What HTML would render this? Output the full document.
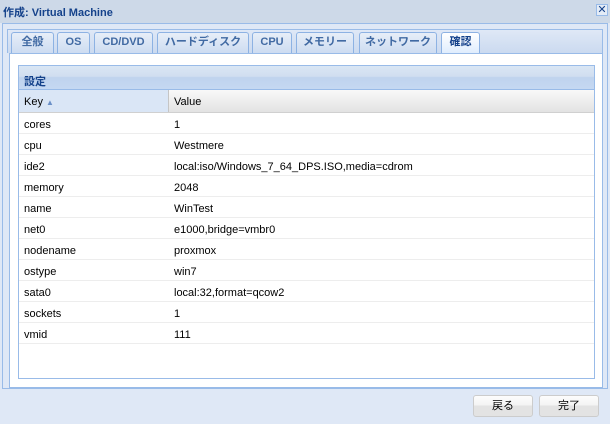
<!DOCTYPE html><html><head><meta charset="utf-8"><style>
*{box-sizing:border-box;margin:0;padding:0}
body{width:610px;height:424px;background:#dfe8f6;font-family:"Liberation Sans","Noto Sans CJK JP",sans-serif;font-size:11px;position:relative;overflow:hidden}
.hdr{position:absolute;left:0;top:0;width:610px;height:23px;background:#cdd9e8}
.ttl{position:absolute;left:3px;top:4px;font-weight:bold;color:#15428b;font-size:11px}
.x{position:absolute;left:596px;top:4px;width:12px;height:12px;border:1px solid #99bbe8;background:#e4ecf7;color:#15428b;font-size:11px;line-height:10px;text-align:center}
.outer{position:absolute;left:2px;top:23px;width:606px;height:366px;border:1px solid #99bbe8;background:#dfe8f6}
.strip{position:absolute;left:7px;top:29px;width:596px;height:24px;border:1px solid #99bbe8;border-bottom:none;background:linear-gradient(#dfe8f6,#cbdaf0)}
.tab{position:absolute;top:32px;height:21px;border:1px solid #8db2e3;border-bottom:none;border-radius:3px 3px 0 0;background:linear-gradient(#e7eef8,#cddcf1);color:#416aa3;font-weight:bold;text-align:center;line-height:19px;font-size:11px}
.tab.a{background:linear-gradient(#fff,#deecfd);color:#15428b;height:22px}
.content{position:absolute;left:9px;top:53px;width:594px;height:335px;background:#fff;border:1px solid #99bbe8}
.grid{position:absolute;left:18px;top:65px;width:577px;height:314px;border:1px solid #99bbe8;background:#fff}
.gt{height:24px;background:linear-gradient(#dae6f4 0%,#d0def0 45%,#bfd3ee 50%,#c5d8f2);border-bottom:1px solid #99bbe8;color:#15428b;font-weight:bold;padding:7px 0 0 5px}
.gh{height:23px;display:flex;border-bottom:1px solid #d0d0d0}
.gh div{padding:6px 0 0 5px}
.k{width:150px;background:#dae6f6;border-right:1px solid #c5c5c5}
.v{flex:1;background:linear-gradient(#f9f9f9,#e3e3e3)}
.row{height:21px;display:flex;border-bottom:1px solid #ededed;color:#000}
.row div{padding:6px 0 0 5px}
.row .c1{width:150px}
.btn{position:absolute;top:395px;width:60px;height:22px;border:1px solid #ccc;border-radius:3px;background:linear-gradient(#fdfdfd 0%,#f4f4f4 45%,#e3e3e3 50%,#e3e3e3);text-align:center;line-height:20px;color:#000}
</style></head><body>
<div class="hdr"><div class="ttl">作成: Virtual Machine</div><div class="x">✕</div></div>
<div class="outer"></div>
<div class="strip"></div>
<div class="tab" style="left:11px;width:43px">全般</div>
<div class="tab" style="left:57px;width:33px">OS</div>
<div class="tab" style="left:94px;width:59px">CD/DVD</div>
<div class="tab" style="left:157px;width:92px">ハードディスク</div>
<div class="tab" style="left:252px;width:40px">CPU</div>
<div class="tab" style="left:296px;width:58px">メモリー</div>
<div class="tab" style="left:359px;width:78px">ネットワーク</div>
<div class="tab a" style="left:441px;width:39px">確認</div>
<div class="content"></div>
<div class="grid">
<div class="gt">設定</div>
<div class="gh"><div class="k">Key <span style="color:#6a8fc7;font-size:8px">▲</span></div><div class="v">Value</div></div>
<div class="row"><div class="c1">cores</div><div>1</div></div>
<div class="row"><div class="c1">cpu</div><div>Westmere</div></div>
<div class="row"><div class="c1">ide2</div><div>local:iso/Windows_7_64_DPS.ISO,media=cdrom</div></div>
<div class="row"><div class="c1">memory</div><div>2048</div></div>
<div class="row"><div class="c1">name</div><div>WinTest</div></div>
<div class="row"><div class="c1">net0</div><div>e1000,bridge=vmbr0</div></div>
<div class="row"><div class="c1">nodename</div><div>proxmox</div></div>
<div class="row"><div class="c1">ostype</div><div>win7</div></div>
<div class="row"><div class="c1">sata0</div><div>local:32,format=qcow2</div></div>
<div class="row"><div class="c1">sockets</div><div>1</div></div>
<div class="row"><div class="c1">vmid</div><div>111</div></div>
</div>
<div class="btn" style="left:473px">戻る</div>
<div class="btn" style="left:539px">完了</div>
</body></html>
